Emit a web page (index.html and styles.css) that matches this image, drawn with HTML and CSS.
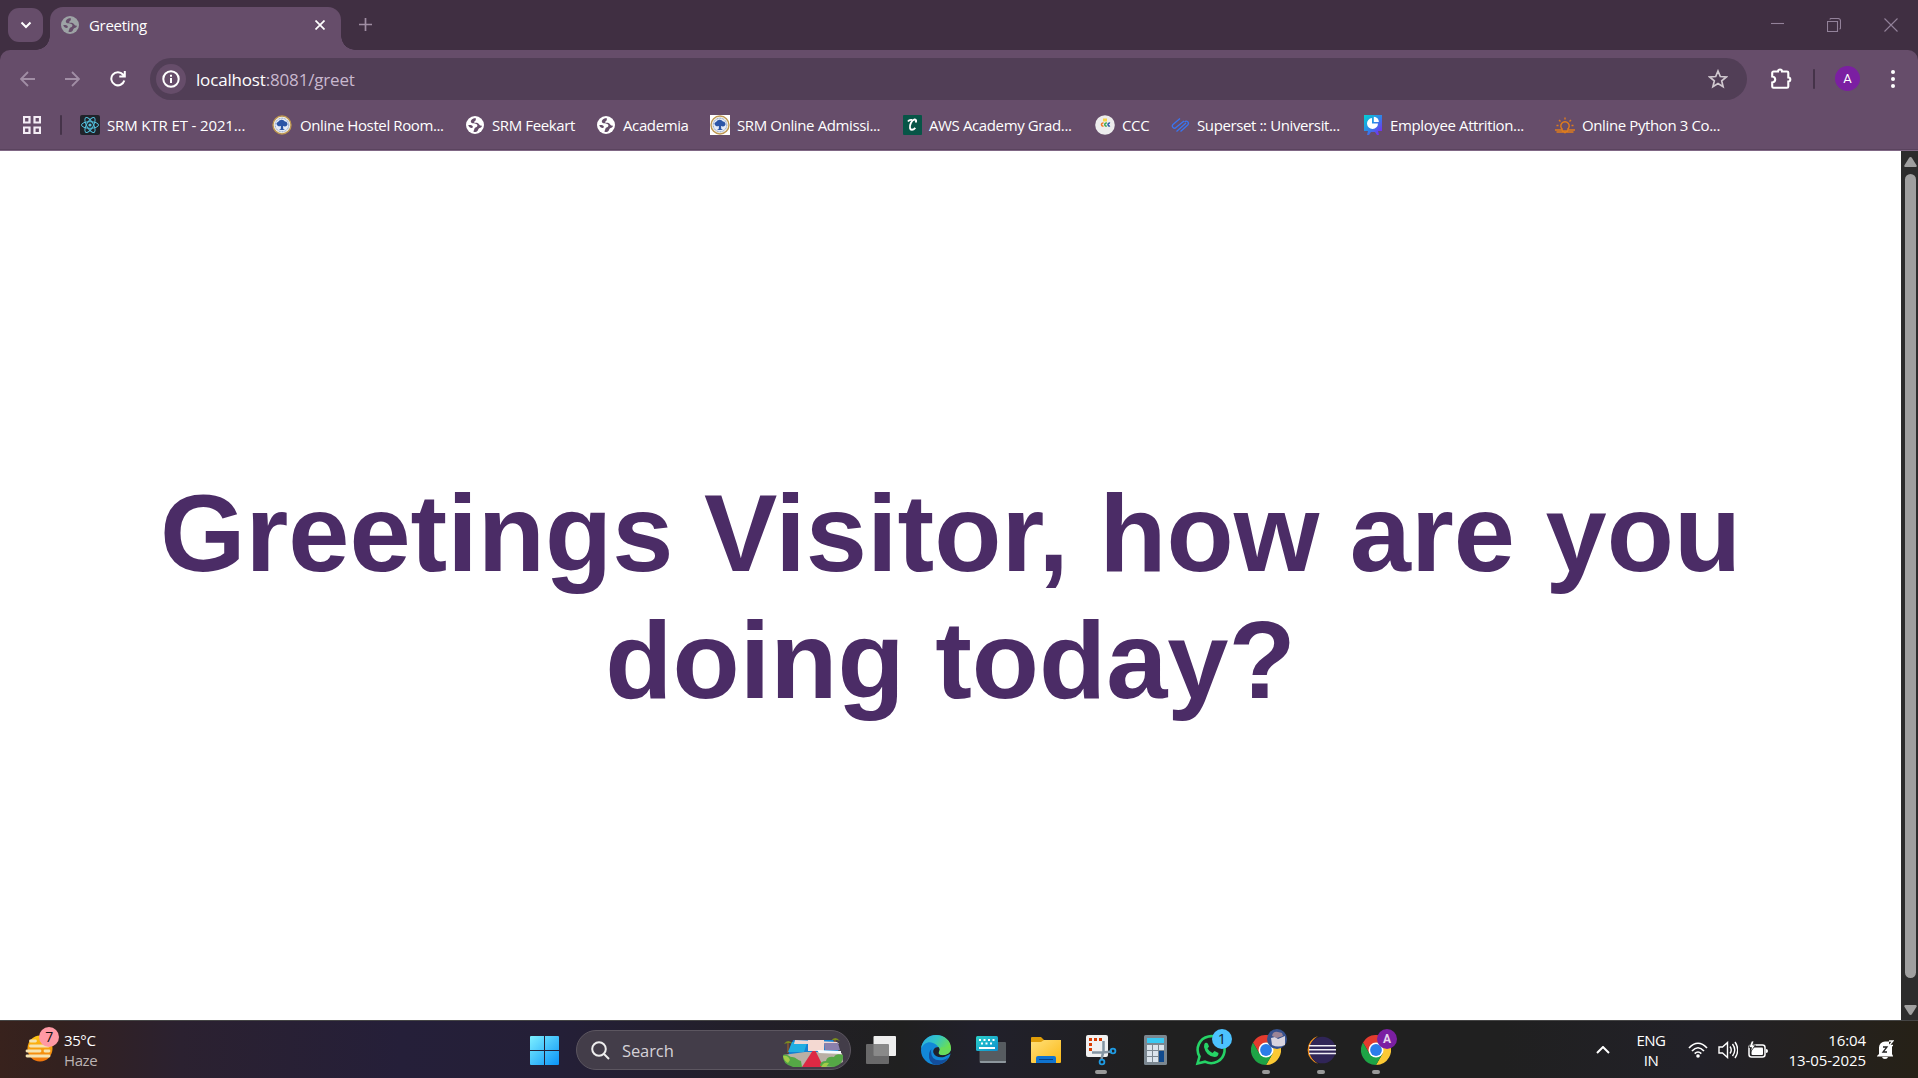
FILE: index.html
```html
<!DOCTYPE html>
<html lang="en">
<head>
<meta charset="utf-8">
<title>Greeting</title>
<link rel="stylesheet" href="styles.css">
</head>
<body>
<svg width="0" height="0" class="defs" aria-hidden="true">
  <defs>
    <linearGradient id="win" x1="0" y1="0" x2="1" y2="1"><stop offset="0" stop-color="#7df0ff"/><stop offset="1" stop-color="#0a93f8"/></linearGradient>
    <linearGradient id="sun" x1="0" y1="0" x2="0" y2="1"><stop offset="0" stop-color="#ffc814"/><stop offset="1" stop-color="#f0740c"/></linearGradient>
    <linearGradient id="edgeTop" x1="0" y1="0" x2="1" y2=".5"><stop offset="0" stop-color="#2aa9e8"/><stop offset=".5" stop-color="#33c6c6"/><stop offset="1" stop-color="#6fe04a"/></linearGradient>
    <linearGradient id="folder" x1="0" y1="0" x2="1" y2="1"><stop offset="0" stop-color="#ffe07a"/><stop offset="1" stop-color="#fbb814"/></linearGradient>
    <linearGradient id="pie" x1="0" y1="0" x2="1" y2="1"><stop offset="0" stop-color="#00d2d2"/><stop offset=".5" stop-color="#2e86e8"/><stop offset="1" stop-color="#8a18f0"/></linearGradient>
    <linearGradient id="kb" x1="0" y1="0" x2="1" y2="1"><stop offset="0" stop-color="#2bd0c8"/><stop offset="1" stop-color="#0e8fd0"/></linearGradient>
    <symbol id="globe" viewBox="0 0 18 18"><circle cx="9" cy="9" r="9"/><path class="land" d="M9.500 2C6.500 2.300 4.200 4.500 5 6.200c.8 1.700 3.600.9 5.200 1.700 1.500.7 1.500 2 .7 2.800-1 .9-2.200.5-2.400 1.900-.2 1.300-.8 1.900-1 3.200 1.400.6 3.300.2 4.300-1.300.8-1.200.4-2 1.800-2.400 1.300-.3 2.300-1.200 2.400-2.600-1.500.6-2.300-.3-3-1.300-.9-1.300-2.700-1.400-4-1.300-1-.1-1.300-1.200-.3-1.600 1-.5 1.600-2 .8-3.300zM2.200 9.300c1.500-.5 3.400-.3 4.300.8.7.8.300 1.900-.9 1.800-1.300-.1-2.900-.9-3.400-2.600z"/></symbol>
    <symbol id="chrome" viewBox="0 0 30 30"><path fill="#e33b2e" d="M2 7.500A15 15 0 0 1 28 7.500H15L8.500 18.800z"/><path fill="#fcc934" d="M28 7.500A15 15 0 0 1 15 30l6.500-11.200L21.500 11.200 15 7.500z"/><path fill="#1ea446" d="M2 7.500A15 15 0 0 0 15 30l6.500-11.200h-13z"/><circle cx="15" cy="15" r="7.500" fill="#fff"/><circle cx="15" cy="15" r="5.900" fill="#2b7de9"/></symbol>
    <symbol id="seal" viewBox="0 0 20 20"><circle cx="10" cy="10" r="9" fill="#f5f2e6" stroke="#bd9650" stroke-width="1.400"/><circle cx="10" cy="10" r="6.800" fill="#e6ecf7" stroke="#5c7cbc" stroke-width=".8" stroke-dasharray="1 .6"/><path d="M5 10a2 2 0 0 1 1-3 4 4 0 0 1 7-.5 2.500 2.500 0 0 1 2 4c-1 1.300-3 1-4 .5l.3 3 1.700 1H7l1.700-1L9 11c-1.500.7-3.300.4-4-1z" fill="#2b55a6"/></symbol>
  </defs>
</svg>
<div class="screen">
  <header class="browser">
    <div class="tabstrip">
      <div class="tab-search"><svg width="12" height="8" viewBox="0 0 12 8" class="stroke-w"><path d="M1.500 1.500 6 6l4.500-4.500"/></svg></div>
      <div class="tab">
        <svg class="globe tab-globe" width="18" height="18"><use href="#globe"/></svg>
        <span class="tab-title">Greeting</span>
        <svg width="10" height="10" viewBox="0 0 10 10" class="stroke-w thin"><path d="M.5.5l9 9M9.500.5l-9 9"/></svg>
      </div>
      <svg class="new-tab" width="13" height="13" viewBox="0 0 13 13"><path d="M6.500 0v13M0 6.500h13"/></svg>
      <div class="window-buttons">
        <svg width="13" height="13" viewBox="0 0 13 13"><path d="M0 5.500h13"/></svg>
        <svg width="14" height="14" viewBox="0 0 14 14"><path d="M.5 3.500h10v10H.5zM3 1.500Q3 .5 4 .5h7Q13.500.5 13.500 3v7q0 1-1 1"/></svg>
        <svg width="14" height="14" viewBox="0 0 14 14"><path d="M.5.5l13 13M13.500.5l-13 13"/></svg>
      </div>
    </div>
    <div class="toolbar">
      <svg class="nav dim" width="15" height="16" viewBox="0 0 15 16"><path d="M15 8H1M8 1L1 8l7 7"/></svg>
      <svg class="nav dim" width="15" height="16" viewBox="0 0 15 16"><path d="M0 8h14M7 1l7 7-7 7"/></svg>
      <svg class="nav" width="16" height="16" viewBox="0 0 16 16"><path d="M14.300 9.500A6.600 6.600 0 1 1 13 3.500l1.500 1.700M14.800 0v5.600H9.300"/></svg>
      <div class="omnibox">
        <div class="site-info"><svg width="18" height="18" viewBox="0 0 18 18" class="stroke-w"><circle cx="9" cy="9" r="7.700"/><path d="M9 8v5M9 4.700v2"/></svg></div>
        <span class="url"><b>localhost</b>:8081/greet</span>
        <svg class="star" width="20" height="20" viewBox="0 0 20 20"><path d="M10 2l2.300 5.500 6 .5-4.600 3.900 1.400 5.800L10 14.600l-5.100 3.100 1.400-5.800L1.700 8l6-.5z"/></svg>
      </div>
      <svg class="puzzle" width="22" height="22" viewBox="0 0 22 22"><path d="M3.500 3.500H8a2 2 0 0 1 4 0h5a1.300 1.300 0 0 1 1.300 1.300v4.700a2 2 0 0 1 0 4v5a1.300 1.300 0 0 1-1.300 1.300H3.500a1.300 1.300 0 0 1-1.300-1.300v-4c4-.5 4-5.500 0-6v-3.700a1.300 1.300 0 0 1 1.300-1.300z"/></svg>
      <i class="divider"></i>
      <span class="avatar">A</span>
      <svg class="dots" width="4" height="18" viewBox="0 0 4 18"><circle cx="2" cy="2" r="2"/><circle cx="2" cy="9" r="2"/><circle cx="2" cy="16" r="2"/></svg>
    </div>
    <nav class="bookmarks">
      <svg class="apps" width="18" height="18" viewBox="0 0 18 18"><path d="M1 1h5.500v5.500H1zM11.500 1H17v5.500h-5.500zM1 11.500h5.500V17H1zM11.500 11.500H17V17h-5.500z"/></svg>
      <i class="divider"></i>
      <span class="bm wide"><svg width="20" height="20" viewBox="0 0 20 20"><rect width="20" height="20" rx="2" fill="#20232a"/><g fill="none" stroke="#53c1de"><ellipse cx="10" cy="10" rx="8.500" ry="3.300"/><ellipse cx="10" cy="10" rx="8.500" ry="3.300" transform="rotate(60 10 10)"/><ellipse cx="10" cy="10" rx="8.500" ry="3.300" transform="rotate(120 10 10)"/></g><circle cx="10" cy="10" r="1.600" fill="#53c1de"/></svg>SRM KTR ET - 2021...</span>
      <span class="bm"><svg class="seal-round" width="20" height="20"><use href="#seal"/></svg>Online Hostel Room...</span>
      <span class="bm"><svg class="globe" width="18" height="18"><use href="#globe"/></svg>SRM Feekart</span>
      <span class="bm"><svg class="globe" width="18" height="18"><use href="#globe"/></svg>Academia</span>
      <span class="bm"><svg class="white" width="20" height="20"><use href="#seal"/></svg>SRM Online Admissi...</span>
      <span class="bm"><svg width="19" height="20" viewBox="0 0 19 20"><rect width="19" height="20" rx="1" fill="#075547"/><path d="M12.500 7.500c1.200-1.500.6-3.300-1-3-3 .5-5 5.500-4.500 8.500.4 2.400 3 2.400 5.300-.2M5 6.500C6 5 7.500 4.700 9 5" fill="none" stroke="#fff" stroke-width="1.900"/></svg>AWS Academy Grad...</span>
      <span class="bm"><svg width="20" height="20" viewBox="0 0 20 20"><circle cx="10" cy="10" r="9.800" fill="#ececec"/><path d="M8 3.500h4v3H8z" fill="#f8d548"/><g fill="none" stroke-width="1.500"><path d="M8.500 8.200a1.500 1.500 0 1 0 0 2.800" stroke="#ef7b26"/><path d="M11.800 8.200a1.500 1.500 0 1 0 0 2.800" stroke="#35a852"/><path d="M15 8.200a1.500 1.500 0 1 0 0 2.800" stroke="#285ea8"/></g></svg>CCC</span>
      <span class="bm"><svg width="19" height="20" viewBox="0 0 19 20"><path d="M9 3.500L2 9.500q-1.500 1.500 0 3t3 0L13 6M5.500 16.500L15 8M9.500 16.500l7.200-6.500q1.500-1.800 0-3.200t-3 .2" fill="none" stroke="#3975f0" stroke-width="1.300"/></svg>Superset :: Universit...</span>
      <span class="bm"><svg width="20" height="20" viewBox="0 0 20 20"><path d="M1 0h18v16h-4l1 4h-2l-2-3H8l-2 3H4l1-4H1z" fill="url(#pie)"/><path d="M9 3v5.500h6A5.500 5.500 0 1 1 9 3z" fill="#fff"/><path d="M10.800 1.800v5.300h5A5 5 0 0 0 10.800 1.800z" fill="#fff"/></svg>Employee Attrition...</span>
      <span class="bm"><svg width="20" height="20" viewBox="0 0 20 20"><g fill="none" stroke="#e07c1c" stroke-width="1.400"><path d="M7.800 14.500a4.200 4.200 0 1 1 4.400 0M0 15h6.500l1.500 1h4l1.500-1H20M1.500 17h7l1.500.8 1.500-.8h7M10 2.500v2M4 5l1.500 1.500M16 5l-1.500 1.500M1.500 10.500h2M16.500 10.500h2"/></g></svg>Online Python 3 Co...</span>
    </nav>
  </header>

  <main class="viewport">
    <div class="page"><h1>Greetings Visitor, how are you doing today?</h1></div>
    <div class="scrollbar">
      <svg width="13" height="10" viewBox="0 0 13 10"><path d="M6.500 0Q7.500 0 8 1l4.700 7.500q.3 1.500-1 1.500H1.300Q0 10 .3 8.500L5 1q.6-1 1.500-1z"/></svg>
      <div class="thumb"></div>
      <svg width="13" height="10" viewBox="0 0 13 10"><path d="M6.500 10Q7.500 10 8 9l4.700-7.500Q13 0 11.700 0H1.300Q0 0 .3 1.500L5 9q.6 1 1.500 1z"/></svg>
    </div>
  </main>

  <footer class="taskbar">
    <div class="weather">
      <svg width="34" height="36" viewBox="0 0 34 36"><ellipse cx="15" cy="21.500" rx="12.500" ry="13" fill="url(#sun)"/><path d="M5.500 14h5M5.500 19h18M2 24h13M20 24h4M2 29h22" stroke="#f6e3b0" stroke-width="2.800" stroke-linecap="round"/><circle cx="24" cy="10" r="10" fill="#ff99a4"/><text x="24" y="15" text-anchor="middle" class="badge-text">7</text></svg>
      <div><p class="temp">35°C</p><p class="cond">Haze</p></div>
    </div>
    <div class="apps-row">
      <svg class="start" width="29" height="29" viewBox="0 0 29 29"><path fill="url(#win)" d="M0 1q0-1 1-1h13v14H0zM15 0h13q1 0 1 1v13H15zM0 15h14v14H1q-1 0-1-1zM15 15h14v13q0 1-1 1H15z"/></svg>
      <div class="search">
        <svg width="19" height="19" viewBox="0 0 19 19"><circle cx="8" cy="8" r="6.800"/><path d="M13 13l5 5"/></svg>
        <span>Search</span>
        <svg class="scene" width="62" height="32" viewBox="0 0 62 32"><path d="M6 17V6M53 14V3" stroke="#8a5a30" stroke-width="1.500"/><path d="M2 8q4-6 9 0q-4-2-9 0zM49 5q4-6 9 0q-4-2-9 0z" fill="#7b8e1d"/><path d="M11 4h40l7 14-1 5H5z" fill="#1582d2"/><path d="M10 6l15 1-3 9H6z" fill="#20aee2"/><path d="M13 4l42 2 2 2H12z" fill="#eed6d2"/><path d="M26 4h16v11H26z" fill="#f4d9d2"/><path d="M42 7h14l2 7H43z" fill="#8b80ac"/><path d="M1 19l22-3h17l20 1 1 9-11 5H14z" fill="#b9b0a5"/><path d="M35 14l24 1v3l-22-1z" fill="#f5fafd"/><path d="M30.500 15h3l8 16H20z" fill="#dd2944"/><path d="M1 19c5-2 6 2 9 2 4 0 5 3 9 4l1 6H11Q0 28 1 19zM38 30q0-5 6-5 1-5 8-4 2-4 9-2 1 9-9 12z" fill="#55a846"/><path d="M1 20q5-1 7 4l-2 3q-4-2-5-7zM41 28q2-2 6-1l-3 4h-5z" fill="#a2cc49"/></svg>
      </div>
      <div class="icons">
        <div class="app"><svg width="30" height="30" viewBox="0 0 30 30"><rect x="7.500" y="1" width="22.500" height="20" rx="1" fill="#eee"/><rect x="0" y="9" width="23" height="20" rx="1" fill="#777" fill-opacity=".85"/></svg></div>
        <div class="app"><svg width="30" height="30" viewBox="0 0 30 30"><circle cx="15" cy="15" r="15" fill="#1288d8"/><path d="M0 14C1 5 8 0 15 0c9 0 15 6 15 13 0 5-4 7-8 7-3 0-5-1-4-3 2-3-1-7-6-9C7 6 2 9 0 14z" fill="url(#edgeTop)"/><path d="M10 16q0 11 12 9 3-.5 5.500-3Q23 30 15 30 7 28 8 19q.5-4 4-6-2 1-2 3z" fill="#134e9c"/><path d="M17.500 12c-4 0-6 3-5 6 1.500 4 7 5 11 3.700L30 18.500 30 15q-3 6-10 5-3-1-2-3 1.500-2-.5-5z" fill="#20202b"/><path d="M30 13c0 5-4 7-8 7-3 0-5-1-4-3l2-5z" fill="#68dc5b"/></svg></div>
        <div class="app"><svg width="30" height="30" viewBox="0 0 30 30"><rect x="3.500" y="7" width="26.500" height="21" rx="1" fill="#565b60"/><path d="M4 26h26v1q0 1-1 1H5q-1 0-1-1z" fill="#8d969d"/><rect x="0" y="1" width="22" height="15" rx="1.500" fill="url(#kb)"/><path d="M3 5h17M5 8.500h13" stroke="#fff" stroke-width="2" stroke-dasharray="2 2.500"/><path d="M3 13h16" stroke="#fff" stroke-width="2"/></svg></div>
        <div class="app"><svg width="30" height="30" viewBox="0 0 30 30"><path d="M0 3q0-1 1-1h9l3 3v4H0z" fill="#df9d08"/><path d="M0 7h10l3-2h17v22q0 1-1 1H1q-1 0-1-1z" fill="url(#folder)"/><path d="M5 28v-5q0-2 2-2h16q2 0 2 2v5z" fill="#0f73cf"/><path d="M8 24.500h14" stroke="#063f83"/></svg></div>
        <div class="app running"><svg width="30" height="30" viewBox="0 0 30 30"><rect width="22" height="22" rx="2" fill="#f1f1f1"/><path d="M3 4.500h14M4.500 8v9" stroke="#d83b01" stroke-width="3" stroke-dasharray="3 2" fill="none"/><path d="M17.500 6v10l-2 8M6 17.500h11l9-1" stroke="#8595a2" stroke-width="2.500" fill="none"/><circle cx="16" cy="27" r="2.400" fill="none" stroke="#1e9be4" stroke-width="1.800"/><circle cx="27" cy="16" r="2.400" fill="none" stroke="#1e9be4" stroke-width="1.800"/></svg></div>
        <div class="app"><svg width="30" height="30" viewBox="0 0 30 30"><rect x="3" width="23" height="30" rx="1.500" fill="#7b8790"/><rect x="6" y="3" width="17" height="5" fill="#38c9f2"/><path d="M6 10h5v5H6zM12 10h5v5h-5zM18 10h5v5h-5zM6 16h5v5H6zM12 16h5v5h-5zM6 22h5v5H6zM12 22h5v5h-5z" fill="#dbe4ec"/><path d="M18 16h5v11h-5z" fill="#104a8d"/></svg></div>
        <div class="app"><svg width="30" height="30" viewBox="0 0 30 30"><path d="M1.500 28.500l2-7A13.500 13.500 0 1 1 9 26.700z" fill="none" stroke="#25d366" stroke-width="2.600"/><path d="M9 8q2-1 3 1l1 2.500-1.500 2q2 3.500 5 4.500l2-2 4 2q0 4-4 4Q10 21 8 12q0-3 1-4z" fill="#25d366"/></svg><span class="badge blue">1</span></div>
        <div class="app running"><svg width="30" height="30"><use href="#chrome"/></svg><span class="badge photo"><svg width="20" height="20" viewBox="0 0 20 20"><circle cx="10" cy="10" r="10" fill="#36518e"/><path d="M4 9l4-1 3 2 7-3v9q-7 3-13 0z" fill="#d8d4df"/><path d="M5 7q1-5 6-4l4 1 1 3-6 2z" fill="#9b8496"/></svg></span></div>
        <div class="app running"><svg width="30" height="30" viewBox="0 0 30 30"><path d="M12 1A14.500 14.500 0 0 0 12 28.800Q4 24 4 15T12 1z" fill="#f7941e"/><circle cx="16.500" cy="15" r="13.300" fill="#302557"/><path d="M3 10.800h27M3 14.800h27M3 18.500h27" stroke="#f0eef5" stroke-width="1.600"/></svg></div>
        <div class="app running"><svg width="30" height="30"><use href="#chrome"/></svg><span class="badge purple">A</span></div>
      </div>
    </div>
    <div class="tray">
      <svg width="14" height="8" viewBox="0 0 14 8" class="stroke-w"><path d="M1 7l6-6 6 6"/></svg>
      <div class="lang"><p>ENG</p><p>IN</p></div>
      <svg class="wifi" width="20" height="16" viewBox="0 0 20 16"><path d="M1 6q9-9.500 18 0M4 9q6-6.500 12 0M6.700 11.700q3.300-3.400 6.600 0"/><circle cx="10" cy="14" r="1.800"/></svg>
      <svg class="vol" width="20" height="18" viewBox="0 0 20 18"><path d="M1 6h3.500l5-4.500v15L4.500 12H1zM12 5.500q2.500 3.500 0 7M14.500 3q4.500 6 0 12M17 1q5.500 8 0 16"/></svg>
      <svg class="batt" width="20" height="18" viewBox="0 0 20 18"><rect x="1" y="4" width="16" height="12" rx="2.500" class="line"/><rect x="3.500" y="6.500" width="11.500" height="7.500" rx="1"/><path d="M18 8q2 0 2 2t-2 2z"/><path d="M3.500 0L1 6.500h2.500L2.500 11 7.500 4H4.800L6 0z" class="bolt"/></svg>
      <div class="clock"><p>16:04</p><p>13-05-2025</p></div>
      <svg class="bell" width="17" height="19" viewBox="0 0 17 19"><path d="M2 14V7.500a6 6 0 0 1 6-6h4v4h3V14l1 2v.5H0V16zM5 17h6q-.5 2-3 2t-3-2z"/><path d="M6 7h4L6 12h4" class="z"/><path d="M12 1h4l-4 4.500h4" class="z light"/></svg>
    </div>
  </footer>
</div>
</body>
</html>
```
FILE: styles.css
```css
* { box-sizing: border-box; }
body { margin: 0; overflow: hidden; font-family: "Open Sans", "Noto Sans", sans-serif; color: #fff; }
p, h1 { margin: 0; }
svg { display: block; flex: none; }
.defs { position: absolute; }
.screen { width: 1918px; height: 1078px; display: flex; flex-direction: column; }
.stroke-w { fill: none; stroke: #fff; stroke-width: 2; }
.thin { stroke-width: 1.7; }

/* Browser chrome */
.browser { height: 151px; background: #402f42; }
.tabstrip { height: 50px; display: flex; align-items: flex-start; padding-left: 8px; }
.tab-search { width: 35px; height: 34px; margin-top: 8px; border-radius: 11px; background: #664d6a; display: flex; align-items: center; justify-content: center; }
.tab { position: relative; width: 291px; height: 43px; margin: 7px 0 0 7px; padding: 0 16px 7px 11px; border-radius: 13px 13px 0 0; background: #664d6a; display: flex; align-items: center; }
.tab::before, .tab::after { content: ""; position: absolute; bottom: 0; width: 14px; height: 14px; }
.tab::before { left: -14px; background: radial-gradient(circle at 0 0, transparent 13.5px, #664d6a 14px); }
.tab::after { right: -14px; background: radial-gradient(circle at 100% 0, transparent 13.5px, #664d6a 14px); }
.tab-title { flex: 1; margin-left: 10px; font-size: 15px; letter-spacing: -.3px; }
.globe { fill: #fff; }
.globe.tab-globe { fill: #9da3a5; }
.land { fill: #664d6a; }
.new-tab { margin: 18px 0 0 18px; stroke: #a08ea3; stroke-width: 1.7; }
.window-buttons { margin: 18px 20px 0 auto; display: flex; gap: 43px; fill: none; stroke: #93829a; stroke-width: 1.1; }
.toolbar { height: 50px; display: flex; align-items: center; padding: 7px 0 0 20px; background: #664d6a; border-radius: 10px 10px 0 0; }
.nav { fill: none; stroke: #fff; stroke-width: 2; margin-right: 30px; }
.nav.dim { stroke: #a18ea5; stroke-width: 1.8; }
.nav:nth-child(3) { margin-right: 24px; }
.omnibox { width: 1597px; height: 42px; border-radius: 21px; background: #513e56; display: flex; align-items: center; padding: 0 19px 0 6px; }
.site-info { width: 30px; height: 30px; border-radius: 50%; background: #664d6a; display: flex; align-items: center; justify-content: center; }
.url { flex: 1; margin-left: 10px; padding-top: 1px; font-size: 17px; letter-spacing: -.17px; color: #c9b8cf; }
.url b { font-weight: 400; color: #fff; }
.star { fill: none; stroke: #d0c8cf; stroke-width: 1.7; }
.puzzle { margin-left: 23px; fill: none; stroke: #fff; stroke-width: 2.1; }
.divider { width: 2px; height: 20px; background: #453349; border-radius: 1px; }
.toolbar .divider { margin-left: 21px; }
.avatar { width: 25px; height: 25px; margin-left: 20px; border-radius: 50%; background: #7b1fa2; font: 13px/25px Roboto, sans-serif; text-align: center; }
.dots { margin-left: 31px; fill: #fff; }
.bookmarks { height: 51px; display: grid; align-items: center; grid-template-columns: 37px 20px 193px 193px 131px 113px 193px 192px 76px 192px 192px 200px; padding: 0 0 1px 23px; background: #664d6a; border-bottom: 1px solid #806785; box-shadow: inset 0 -1px #5a435e; }
.apps { fill: none; stroke: #f4edf5; stroke-width: 2.2; }
.bm { display: flex; align-items: center; gap: 7px; font-size: 15px; letter-spacing: -.38px; white-space: nowrap; line-height: 20px; }
.bm.wide { letter-spacing: -.13px; }
.bm .globe { margin-right: 1px; }
.seal-round { margin-left: -1px; margin-right: 1px; }
.white { background: #fff; }

/* Page */
.viewport { height: 869px; display: flex; background: #fff; }
.page { flex: 1; display: flex; align-items: center; justify-content: center; padding: 21px 100px 0; }
h1 { font: bold 110px/127px "Liberation Sans", Arial, sans-serif; color: #4b2c66; text-align: center; }
.scrollbar { width: 17px; padding: 6px 2px 5px 3px; background: #2c2c2c; display: flex; flex-direction: column; align-items: center; justify-content: space-between; fill: #9f9f9f; }
.thumb { width: 11px; height: 804px; margin: 7px 0 auto; border-radius: 6px; background: #9f9f9f; }

/* Taskbar */
.taskbar { height: 58px; display: flex; border-top: 1px solid #454545; background: linear-gradient(90deg, #38221d 0, #33211f 60px, #2b2130 180px, #251f39 400px, #241f37 560px, #221f28 760px, #202020 900px, #21202b 980px, #202020 1150px, #202020 1500px, #222128 1700px, #262117 1918px); }
.weather { width: 530px; padding: 6px 0 0 25px; display: flex; gap: 5px; font-size: 15px; line-height: 20px; letter-spacing: -.4px; }
.weather div { padding-top: 3px; }
.cond { color: #bbb3b3; }
.badge-text { font-size: 14px; fill: #111; }
.apps-row { display: flex; align-items: flex-start; }
.start { margin-top: 15px; }
.search { width: 275px; height: 40px; margin: 9px 15px 0 17px; padding: 0 6px 0 14px; border: 1px solid #5c5660; border-radius: 20px; background: #433d49; display: flex; align-items: center; font-size: 16.5px; color: #d5d2d7; letter-spacing: -.1px; }
.search svg { fill: none; stroke: #eee; stroke-width: 2; }
.search span { flex: 1; margin-left: 12px; padding-top: 1px; }
.search .scene { stroke-width: 0; margin-top: 3px; }
.icons { display: flex; gap: 25px; padding-top: 14px; }
.app { position: relative; width: 30px; height: 42px; overflow: visible; }
.app > svg { overflow: visible; }
.running::after { content: ""; position: absolute; left: 11px; bottom: 3px; width: 8px; height: 4px; border-radius: 2px; background: #999; }
.running:nth-child(5)::after { left: 9px; width: 12px; }
.badge { position: absolute; left: 16px; top: -6px; width: 20px; height: 20px; border-radius: 50%; text-align: center; font-size: 14.5px; line-height: 20px; }
.badge.blue { background: #4cc2ff; color: #102030; }
.badge.purple { background: #7b1fa2; color: #e7d5ee; font: bold 12px/20px Roboto, sans-serif; }
.tray { margin-left: auto; padding-right: 24px; display: flex; align-items: center; font-size: 15px; line-height: 20px; fill: #fff; }
.lang { width: 40px; margin: 0 17px 0 21px; text-align: center; letter-spacing: -.5px; }
.wifi, .vol { stroke: #fff; stroke-width: 1.7; fill: none; }
.wifi circle { fill: #fff; stroke: none; }
.vol { margin-left: 10px; stroke-width: 1.4; }
.batt { margin-left: 10px; }
.line { fill: none; stroke: #fff; stroke-width: 1.5; }
.bolt { stroke: #222; stroke-width: .8; }
.clock { width: 98px; text-align: right; letter-spacing: -.08px; white-space: nowrap; }
.bell { margin-left: 11px; }
.z { fill: none; stroke: #222; stroke-width: 1.3; }
.z.light { stroke: #fff; }
```
